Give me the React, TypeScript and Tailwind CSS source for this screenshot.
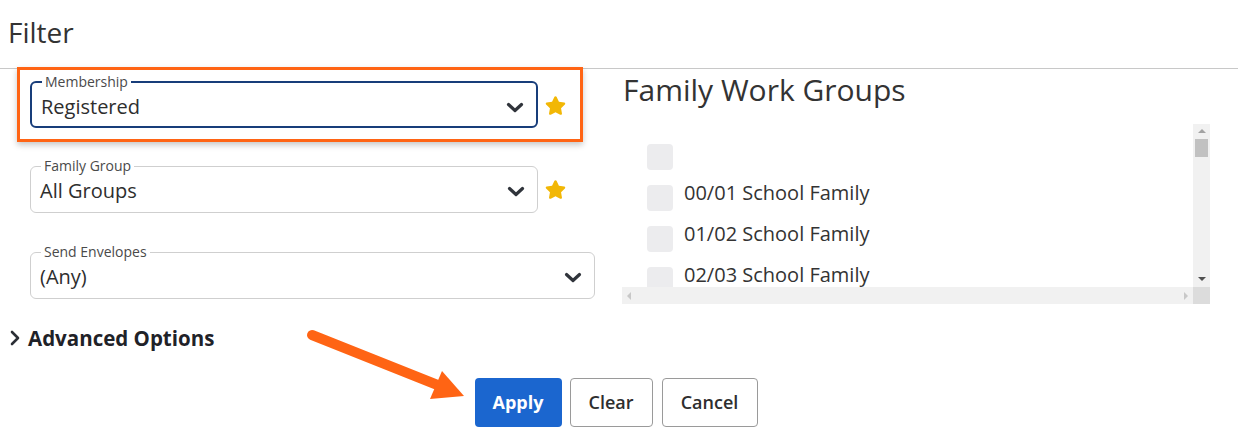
import React from 'react';
import { FaStar } from 'react-icons/fa';

const Chevron = ({ className = '' }: { className?: string }) => (
  <svg width="18" height="11" viewBox="0 0 18 11" className={className}>
    <polyline points="2.5,2.5 9,8.5 15.5,2.5" fill="none" stroke="#30343b" strokeWidth="3.2" strokeLinecap="round" strokeLinejoin="round" />
  </svg>
);

const SelectBox = ({ label, value, focused, width }: { label: string; value: string; focused?: boolean; width: string }) => (
  <fieldset
    className={`${width} rounded-[6px] pl-[9px] pr-[12px] ${
      focused ? 'border-2 border-[#183d7a] pb-[5px]' : 'border border-[#cfcfcf] pb-[7px]'
    }`}
  >
    <legend className="ml-[1px] px-[3px] text-[14px] leading-[16px] text-[#4a4a4a]">{label}</legend>
    <div className="mt-[3px] flex items-center justify-between">
      <span className="text-[20px] leading-[28px] text-[#2e2e2e]">{value}</span>
      <Chevron />
    </div>
  </fieldset>
);

const items = ['', '00/01 School Family', '01/02 School Family', '02/03 School Family'];

export default function App() {
  return (
    <div className="relative w-[1238px] h-[440px] overflow-hidden bg-white font-['Open_Sans',sans-serif] text-[#2e2e2e]">
      {/* header */}
      <div className="h-[69px] border-b border-[#c8c8c8] pl-[8px] pt-[13px]">
        <h1 className="text-[28px] leading-[38px] text-[#333]">Filter</h1>
      </div>

      <div className="flex">
        {/* left column */}
        <div className="w-[622px] pl-[17px]">
          <div className="mt-[-2px] w-[566px] h-[75px] border-[3px] border-[#ff6414] bg-white pl-[10px] pt-[4px] shadow-[0_3px_6px_rgba(0,0,0,0.22)]">
            <div className="flex items-center">
              <SelectBox label="Membership" value="Registered" focused width="w-[508px]" />
              <FaStar className="ml-[7px] mt-[8px] text-[21px] text-[#f2b705]" />
            </div>
          </div>

          <div className="mt-[16px] pl-[13px] flex items-center">
            <SelectBox label="Family Group" value="All Groups" width="w-[508px]" />
            <FaStar className="ml-[7px] mt-[8px] text-[21px] text-[#f2b705]" />
          </div>

          <div className="mt-[31px] pl-[13px]">
            <SelectBox label="Send Envelopes" value="(Any)" width="w-[565px]" />
          </div>
        </div>

        {/* right column */}
        <div className="flex-1">
          <h2 className="mt-[1px] text-[30px] leading-[40px] text-[#333] pl-[1px]">Family Work Groups</h2>
          <div className="mt-[14px] w-[588px] h-[180px] grid grid-cols-[571px_17px] grid-rows-[163px_17px]">
            <div className="overflow-hidden pl-[25px] pt-[20px]">
              {items.map((it, i) => (
                <div key={i} className="flex items-start h-[41px]">
                  <div className="w-[26px] h-[26px] shrink-0 rounded-[4px] bg-[#ececee]" />
                  <span className="ml-[11px] mt-[-6px] text-[20px] leading-[28px] text-[#333]">{it}</span>
                </div>
              ))}
            </div>
            {/* vertical scrollbar */}
            <div className="bg-[#f1f1f1] flex flex-col items-center">
              <div className="mt-[5px] w-0 h-0 border-l-[4px] border-r-[4px] border-b-[4px] border-l-transparent border-r-transparent border-b-[#a3a3a3]" />
              <div className="mt-[6px] w-[13px] h-[18px] bg-[#c1c1c1]" />
              <div className="mt-auto mb-[6px] w-0 h-0 border-l-[4px] border-r-[4px] border-t-[4px] border-l-transparent border-r-transparent border-t-[#505050]" />
            </div>
            {/* horizontal scrollbar */}
            <div className="bg-[#f1f1f1] flex items-center justify-between px-[5px]">
              <div className="w-0 h-0 border-t-[4px] border-b-[4px] border-r-[4px] border-t-transparent border-b-transparent border-r-[#c8c8c8]" />
              <div className="w-0 h-0 border-t-[4px] border-b-[4px] border-l-[4px] border-t-transparent border-b-transparent border-l-[#c8c8c8]" />
            </div>
            <div className="bg-[#dcdcdc]" />
          </div>
        </div>
      </div>

      {/* advanced options */}
      <div className="mt-[20px] pl-[10px] flex items-center">
        <svg width="11" height="16" viewBox="0 0 11 16">
          <polyline points="2,2 8,8 2,14" fill="none" stroke="#2b2f36" strokeWidth="2.6" strokeLinecap="round" strokeLinejoin="round" />
        </svg>
        <span className="ml-[7px] text-[20.5px] leading-[28px] font-bold text-[#1f2228]">Advanced Options</span>
      </div>

      {/* buttons */}
      <div className="mt-[26px] pr-[6px] flex justify-center">
        <button className="w-[87px] h-[49px] rounded-[4px] bg-[#1b66cf] text-white text-[18px] font-bold">Apply</button>
        <button className="ml-[8px] w-[83px] h-[49px] rounded-[4px] border border-[#9a9a9a] bg-white text-[18px] font-semibold text-[#2e2e2e]">Clear</button>
        <button className="ml-[9px] w-[96px] h-[49px] rounded-[4px] border border-[#9a9a9a] bg-white text-[18px] font-semibold text-[#2e2e2e]">Cancel</button>
      </div>

      {/* annotation arrow */}
      <svg className="absolute left-0 top-0 pointer-events-none" width="1238" height="440">
        <line x1="312" y1="335" x2="440" y2="386" stroke="#ff6414" strokeWidth="10" strokeLinecap="round" />
        <polygon points="442,371 430,399 464,396" fill="#ff6414" />
      </svg>
    </div>
  );
}
